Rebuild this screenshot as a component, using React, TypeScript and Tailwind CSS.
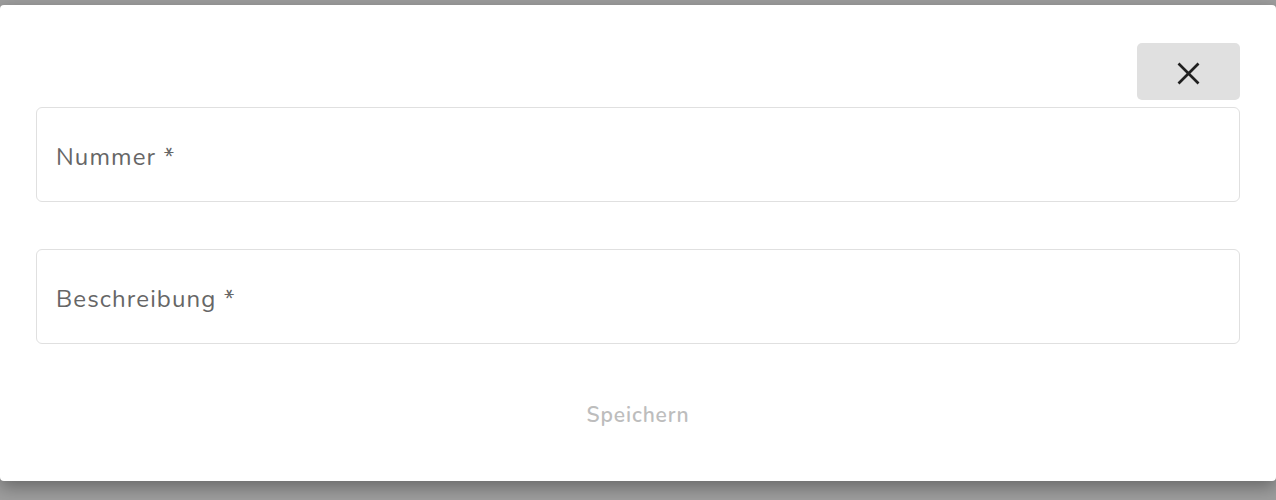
import React from 'react';

const Field = ({ label }: { label: string }) => (
  <div className="h-[95px] w-full rounded-[6px] border border-[#e0e0e0] flex items-center px-[19px] pt-[4px]">
    <span className="text-[24px] text-[#666666] tracking-[1.1px]">{label}</span>
  </div>
);

export default function App() {
  return (
    <div
      className="h-[500px] w-full bg-[#9e9e9e] pt-[5px] overflow-hidden"
      style={{ fontFamily: 'Nunito, "Noto Sans", Lato, sans-serif' }}
    >
      <div className="h-[476px] bg-white rounded-[4px] shadow-[0_6px_18px_rgba(0,0,0,0.35)] px-[36px] pt-[38px]">
        {/* Close */}
        <div className="flex justify-end">
          <button className="w-[103px] h-[57px] rounded-[5px] bg-[#e0e0e0] flex items-center justify-center pt-[3px]">
            <svg width="31" height="31" viewBox="0 0 24 24" fill="none" stroke="#1f1f1f" strokeWidth="2.1" strokeLinecap="square">
              <path d="M5 5 L19 19 M19 5 L5 19" />
            </svg>
          </button>
        </div>

        <div className="mt-[7px] flex flex-col gap-[47px]">
          <Field label="Nummer *" />
          <Field label="Beschreibung *" />
        </div>

        <div className="mt-[56px] flex justify-center">
          <button className="text-[21px] font-semibold text-[#bdbdbd] tracking-[0.9px]">Speichern</button>
        </div>
      </div>
    </div>
  );
}
